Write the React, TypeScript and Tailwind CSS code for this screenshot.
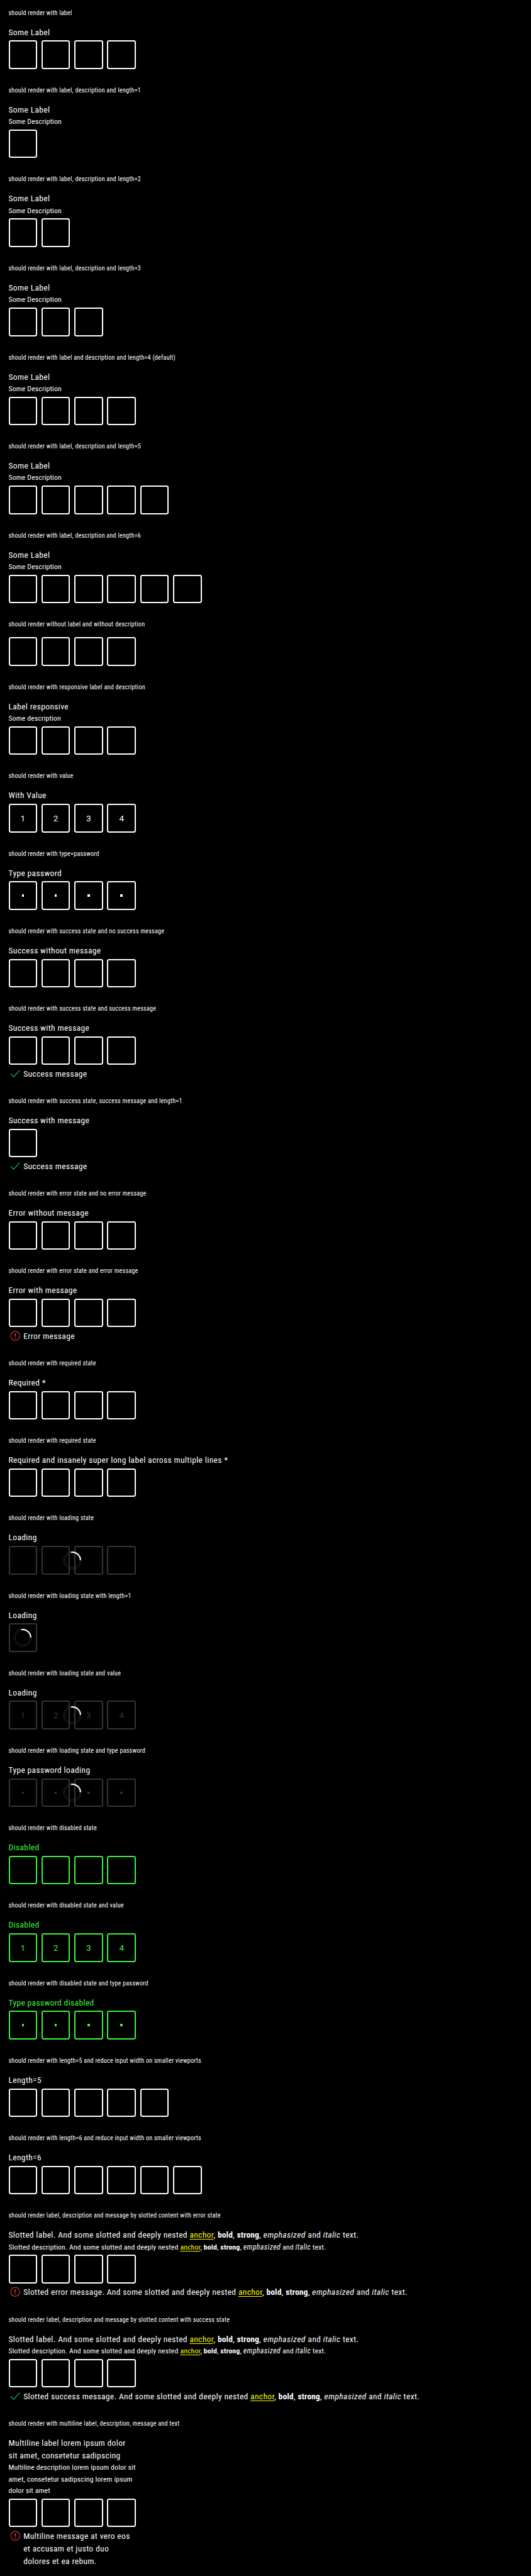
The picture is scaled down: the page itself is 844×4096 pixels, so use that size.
import type { ReactNode } from "react";

type State = "loading" | "disabled";

interface PinProps {
  title: string;
  label?: ReactNode;
  description?: ReactNode;
  length?: number;
  value?: string;
  state?: State;
  success?: ReactNode;
  error?: ReactNode;
}

function CheckIcon() {
  return (
    <svg viewBox="0 0 24 24" className="size-[20.25px] shrink-0" fill="none" stroke="#09d087" strokeWidth="1.2">
      <path d="M3.5 12.3 9 18 20.6 5.4" />
    </svg>
  );
}

function ErrorIcon() {
  return (
    <svg viewBox="0 0 24 24" className="size-[20.25px] shrink-0" fill="none" stroke="#fc4040">
      <circle cx="12" cy="12" r="8.5" strokeWidth="1.2" />
      <path d="M12 7.3v6M12 15v1.8" strokeWidth="1.8" />
    </svg>
  );
}

function Spinner() {
  return (
    <svg viewBox="0 0 40 40" className="absolute top-1/2 left-1/2 size-[33.76px] -translate-1/2" fill="none">
      <circle cx="20" cy="20" r="16.6" stroke="#4a4a4a" strokeWidth="0.6" />
      <circle cx="20" cy="20" r="13.8" stroke="#4a4a4a" strokeWidth="0.6" />
      <path d="M17.4 4.9A15.3 15.3 0 0 1 35.3 19.6" stroke="#fff" strokeWidth="2.4" />
    </svg>
  );
}

function Slotted({ lead }: { lead: string }) {
  return (
    <>
      {lead} And some slotted and deeply nested{" "}
      <a className="text-[#ffff00] underline decoration-1 underline-offset-2">anchor</a>,{" "}
      <b className="font-bold tracking-[0.15px]">bold</b>, <strong className="font-bold tracking-[0.15px]">strong</strong>,{" "}
      <em className="tracking-[0.5px]">emphasized</em> and <i className="tracking-[0.4px]">italic</i> text.
    </>
  );
}

function boxColor(state?: State) {
  if (state === "disabled") return "border-[#3ff23f] text-[#3ff23f]";
  if (state === "loading") return "border-[#353535] text-[#353535]";
  return "border-white text-white";
}

function PinCode({ title, label, description, length = 4, value, state, success, error }: PinProps) {
  const message = success ?? error;
  return (
    <section className="px-[13.5px] py-[13.5px] whitespace-nowrap">
      <h2 className="mb-[13.5px] h-[13.5px] text-[10.13px] leading-[13.5px] tracking-[0.24px]">{title}</h2>
      {label && (
        <div className={`mb-[3.38px] ${state === "disabled" ? "text-[#3ff23f]" : ""}`}>
          <div className="text-[13.5px] leading-[20.28px] tracking-[0.36px]">{label}</div>
          {description && <div className="text-[11.81px] leading-[18.37px] tracking-[0.13px]">{description}</div>}
        </div>
      )}
      <div className="relative flex w-fit gap-[6.76px]">
        {Array.from({ length }, (_, i) => (
          <div
            key={i}
            className={`flex size-[45.57px] items-center justify-center rounded-[3.4px] border-2 font-[Roboto,sans-serif] text-[13.5px] leading-[20.27px] ${boxColor(state)}`}
          >
            {value === "password" ? <span className="size-[3.5px] bg-current" /> : value?.[i]}
          </div>
        ))}
        {state === "loading" && <Spinner />}
      </div>
      {message && (
        <div className="mt-[3.38px] flex items-start gap-[3.38px] text-[13.5px] leading-[20.28px] tracking-[0.36px]">
          {success ? <CheckIcon /> : <ErrorIcon />}
          <span>{message}</span>
        </div>
      )}
    </section>
  );
}

export default function App() {
  return (
    <main className="h-[4096px] w-[844px] overflow-hidden bg-black font-['Roboto_Condensed',Roboto,sans-serif] text-white">
      <PinCode title="should render with label" label="Some Label" />
      <PinCode title="should render with label, description and length=1" label="Some Label" description="Some Description" length={1} />
      <PinCode title="should render with label, description and length=2" label="Some Label" description="Some Description" length={2} />
      <PinCode title="should render with label, description and length=3" label="Some Label" description="Some Description" length={3} />
      <PinCode title="should render with label and description and length=4 (default)" label="Some Label" description="Some Description" />
      <PinCode title="should render with label, description and length=5" label="Some Label" description="Some Description" length={5} />
      <PinCode title="should render with label, description and length=6" label="Some Label" description="Some Description" length={6} />
      <PinCode title="should render without label and without description" />
      <PinCode title="should render with responsive label and description" label="Label responsive" description="Some description" />
      <PinCode title="should render with value" label="With Value" value="1234" />
      <PinCode title="should render with type=password" label="Type password" value="password" />
      <PinCode title="should render with success state and no success message" label="Success without message" />
      <PinCode title="should render with success state and success message" label="Success with message" success="Success message" />
      <PinCode title="should render with success state, success message and length=1" label="Success with message" length={1} success="Success message" />
      <PinCode title="should render with error state and no error message" label="Error without message" />
      <PinCode title="should render with error state and error message" label="Error with message" error="Error message" />
      <PinCode title="should render with required state" label="Required *" />
      <PinCode title="should render with required state" label="Required and insanely super long label across multiple lines *" />
      <PinCode title="should render with loading state" label="Loading" state="loading" />
      <PinCode title="should render with loading state with length=1" label="Loading" length={1} state="loading" />
      <PinCode title="should render with loading state and value" label="Loading" value="1234" state="loading" />
      <PinCode title="should render with loading state and type password" label="Type password loading" value="password" state="loading" />
      <PinCode title="should render with disabled state" label="Disabled" state="disabled" />
      <PinCode title="should render with disabled state and value" label="Disabled" value="1234" state="disabled" />
      <PinCode title="should render with disabled state and type password" label="Type password disabled" value="password" state="disabled" />
      <PinCode title="should render with length=5 and reduce input width on smaller viewports" label="Length=5" length={5} />
      <PinCode title="should render with length=6 and reduce input width on smaller viewports" label="Length=6" length={6} />
      <PinCode
        title="should render label, description and message by slotted content with error state"
        label={<Slotted lead="Slotted label." />}
        description={<Slotted lead="Slotted description." />}
        error={<Slotted lead="Slotted error message." />}
      />
      <PinCode
        title="should render label, description and message by slotted content with success state"
        label={<Slotted lead="Slotted label." />}
        description={<Slotted lead="Slotted description." />}
        success={<Slotted lead="Slotted success message." />}
      />
      <PinCode
        title="should render with multiline label, description, message and text"
        label={<>Multiline label lorem ipsum dolor<br />sit amet, consetetur sadipscing</>}
        description={<>Multiline description lorem ipsum dolor sit<br />amet, consetetur sadipscing lorem ipsum<br />dolor sit amet</>}
        error={<>Multiline message at vero eos<br />et accusam et justo duo<br />dolores et ea rebum.</>}
      />
    </main>
  );
}
